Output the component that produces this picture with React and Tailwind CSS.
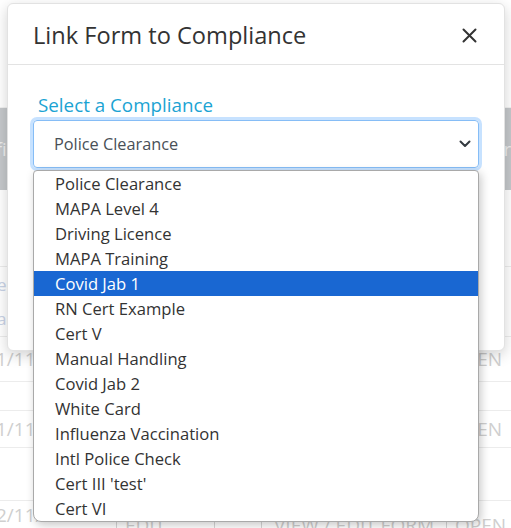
import React from 'react'

// 選択肢（表示順そのまま）
const options = [
  'Police Clearance',
  'MAPA Level 4',
  'Driving Licence',
  'MAPA Training',
  'Covid Jab 1',
  'RN Cert Example',
  'Cert V',
  'Manual Handling',
  'Covid Jab 2',
  'White Card',
  'Influenza Vaccination',
  'Intl Police Check',
  "Cert III 'test'",
  'Cert VI',
]

const ACTIVE = 'Covid Jab 1'

function Background() {
  // モーダルの後ろにある薄いテーブル
  return (
    <div className="flex h-[528px] flex-col text-[#cfcfcf]">
      <div className="h-[108px] border-b border-[#f1f1f1]" />
      <div className="flex h-[82px] items-center justify-between bg-[#c5c8cb] text-[#eeeeee]">
        <span className="-ml-1 text-[18px]">fi</span>
        <span className="text-[18px]">r</span>
      </div>
      <div className="h-[77px] border-b border-[#ececec]" />
      <div className="flex h-[70px] flex-col justify-center border-b border-[#ececec] text-[17px] leading-[34px] text-[#c9d3e6]">
        <span className="-ml-[3px]">e</span>
        <span className="-ml-[3px]">a</span>
      </div>
      <div className="flex h-[45px] items-center justify-between border-b border-[#ececec] pr-[9px] text-[19px]">
        <span className="-ml-[4px]">1/11/</span>
        <span>OPEN</span>
      </div>
      <div className="h-[29px] border-b border-[#ececec]" />
      <div className="flex h-[37px] items-center justify-between border-b border-[#ececec] pr-[9px] text-[19px]">
        <span className="-ml-[4px]">1/11/</span>
        <span>OPEN</span>
      </div>
      <div className="h-[53px] border-b border-[#ececec]" />
      <div className="flex h-[27px] items-start text-[19px] leading-[24px]">
        <span className="-ml-[4px] mt-[2px] w-[120px]">2/11/</span>
        <span className="mt-[12px] w-[99px] border-l border-r border-[#d6d6d6] pl-2">EDIT INFO</span>
        <span className="mt-[12px] w-[47px] border-r border-[#d6d6d6]">&nbsp;</span>
        <span className="mt-[12px] w-[185px] border-r border-[#d6d6d6] pl-3">VIEW / EDIT FORM ⋮</span>
        <span className="mt-[12px] pl-2">OPEN</span>
      </div>
    </div>
  )
}

function CloseIcon() {
  return (
    <svg width="15" height="15" viewBox="0 0 15 15" className="text-[#333333]">
      <path d="M1.5 1.5 L13.5 13.5 M13.5 1.5 L1.5 13.5" stroke="currentColor" strokeWidth="2" strokeLinecap="round" />
    </svg>
  )
}

function Chevron() {
  return (
    <svg width="12" height="8" viewBox="0 0 12 8" className="text-[#343a40]">
      <path d="M1.5 1.5 L6 6 L10.5 1.5" fill="none" stroke="currentColor" strokeWidth="2" strokeLinecap="round" strokeLinejoin="round" />
    </svg>
  )
}

export default function App() {
  return (
    <div className="relative h-[528px] w-[511px] overflow-hidden bg-white font-['Open_Sans',sans-serif]">
      <Background />

      {/* モーダル */}
      <div className="absolute left-[7px] top-[3px] h-[348px] w-[498px] rounded-[6px] border border-[#e2e2e2] bg-white shadow-[0_4px_14px_rgba(0,0,0,0.18)]">
        <div className="flex h-[61px] items-center justify-between border-b border-[#e3e3e3] pl-[25px] pr-[27px] pt-[3px]">
          <h2 className="text-[23.6px] leading-none text-[#333333]">Link Form to Compliance</h2>
          <CloseIcon />
        </div>

        <div className="px-[25px] pt-[28px]">
          <label className="ml-[5px] block text-[18.8px] leading-[24px] text-[#1ba3d3]">Select a Compliance</label>

          <div className="relative mt-[3px]">
            <div className="flex h-[48px] items-center justify-between rounded-[4px] border border-[#86bdf6] pl-[20px] pr-[7px] shadow-[0_0_0_3px_rgba(0,123,255,0.22)]">
              <span className="text-[16.3px] text-[#495057]">Police Clearance</span>
              <Chevron />
            </div>

            {/* ネイティブ select のドロップダウン */}
            <ul className="absolute left-0 top-[50px] z-10 w-[446px] overflow-hidden rounded-b-[8px] rounded-t-[4px] border border-[#a9a9a9] bg-white shadow-[2px_3px_10px_rgba(0,0,0,0.22)]">
              {options.map((o) => (
                <li
                  key={o}
                  className={
                    o === ACTIVE
                      ? 'h-[25px] bg-[#1967d2] pl-[21px] text-[16.6px] leading-[25px] text-white'
                      : 'h-[25px] pl-[21px] text-[16.6px] leading-[25px] text-[#333333]'
                  }
                >
                  {o}
                </li>
              ))}
            </ul>
          </div>

          {/* ドロップダウンの下に隠れているボタン */}
          <button type="button" aria-label="Link" className="mt-[20px] h-[38px] w-[120px] rounded-[4px] bg-[#17a2b8]" />
        </div>
      </div>
    </div>
  )
}
